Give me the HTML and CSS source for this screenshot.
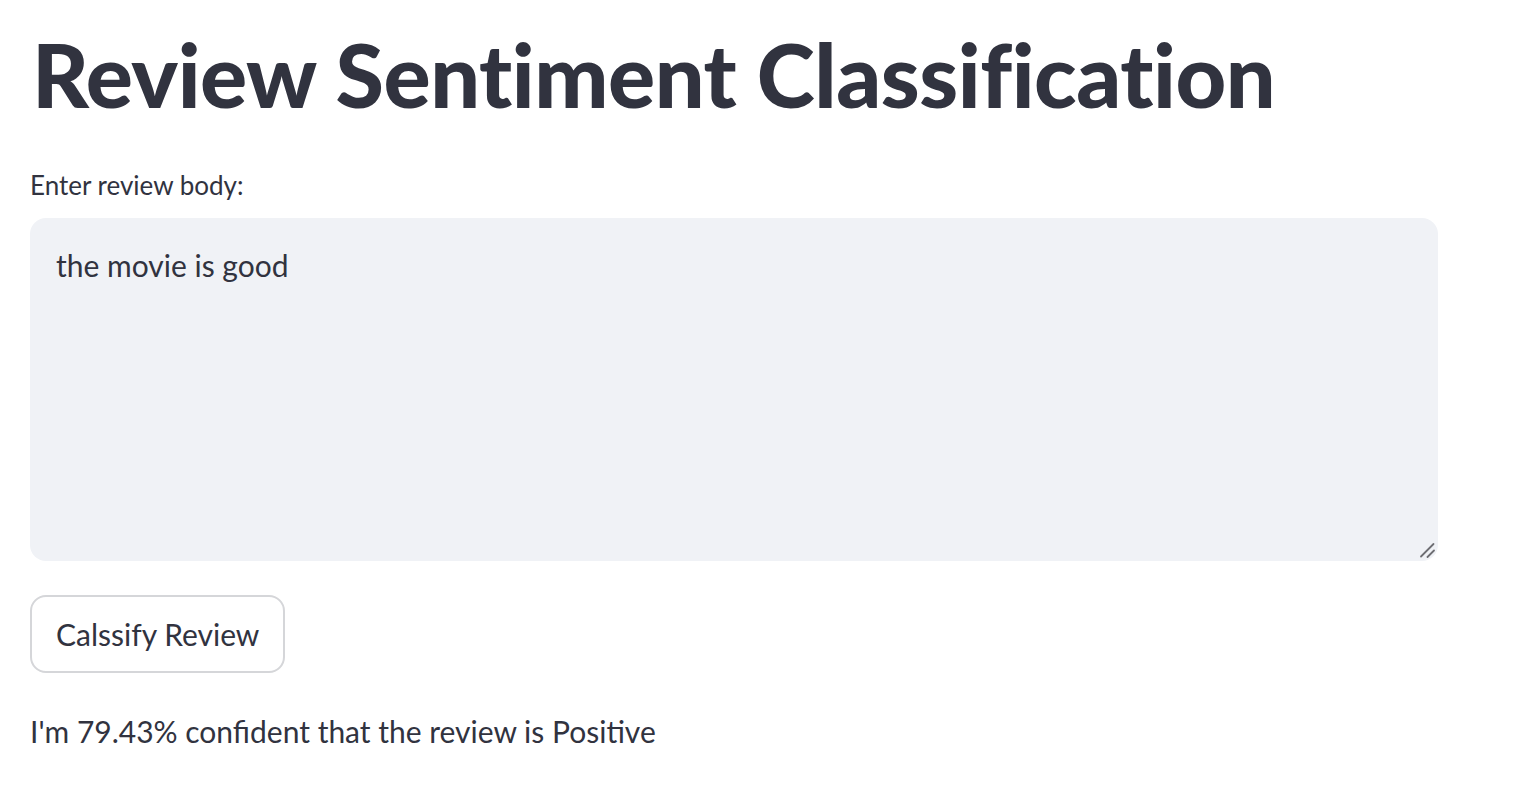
FILE: index.html
```html
<!DOCTYPE html>
<html>
<head>
<meta charset="utf-8">
<title>Review Sentiment Classification</title>
<link rel="stylesheet" href="styles.css">
</head>
<body>
<main class="app">
  <h1 class="title">Review Sentiment Classification</h1>
  <label class="field-label" for="review">Enter review body:</label>
  <div class="input-wrap">
    <textarea id="review" class="review-input">the movie is good</textarea>
    <svg class="resizer" width="16" height="16" viewBox="0 0 16 16" aria-hidden="true">
      <line x1="2" y1="14.5" x2="14.5" y2="2" stroke="#6e6e73" stroke-width="1.8" stroke-linecap="round"/>
      <line x1="8.5" y1="15" x2="15" y2="8.5" stroke="#6e6e73" stroke-width="1.8" stroke-linecap="round"/>
    </svg>
  </div>
  <button class="btn" type="button">Calssify Review</button>
  <p class="result">I'm 79.43% confident that the review is Positive</p>
</main>
</body>
</html>
```
FILE: styles.css
```css
html, body {
  margin: 0;
  padding: 0;
  background: #ffffff;
}
.app {
  display: flex;
  flex-direction: column;
  align-items: flex-start;
  padding: 0 30px;
  width: 1408px;
  font-family: Lato, "Liberation Sans", sans-serif;
  color: #31333f;
}
.title {
  margin: 21px 0 0 2px;
  font-size: 88px;
  font-weight: 900;
  line-height: 106px;
  letter-spacing: -0.45px;
}
.field-label {
  margin-top: 42px;
  font-size: 26px;
  line-height: 32px;
  font-weight: 400;
}
.input-wrap {
  position: relative;
  margin-top: 17px;
  width: 1408px;
  height: 343px;
}
.review-input {
  box-sizing: border-box;
  display: block;
  width: 100%;
  height: 100%;
  padding: 26px 26px;
  border: none;
  outline: none;
  border-radius: 16px;
  background: #f0f2f6;
  color: #31333f;
  font-family: Lato, "Liberation Sans", sans-serif;
  font-size: 30px;
  line-height: 42px;
  resize: none;
}
.resizer {
  position: absolute;
  right: 3px;
  bottom: 3px;
}
.btn {
  box-sizing: border-box;
  margin-top: 34px;
  height: 78px;
  padding: 0 24px;
  display: inline-flex;
  align-items: center;
  justify-content: center;
  border: 2px solid #d5d6d9;
  border-radius: 16px;
  background: #ffffff;
  color: #31333f;
  font-family: Lato, "Liberation Sans", sans-serif;
  font-size: 30px;
  line-height: 42px;
}
.result {
  margin: 37px 0 0 0;
  font-size: 30px;
  line-height: 42px;
}
```
